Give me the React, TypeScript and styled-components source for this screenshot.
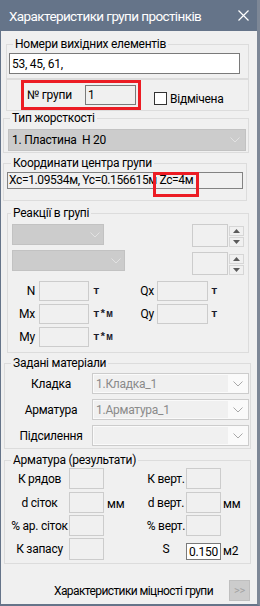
import styled, { createGlobalStyle } from "styled-components";

const GlobalStyle = createGlobalStyle`
  body {
    margin: 0;
    background: #f0f0f0;
    font-family: Roboto, "Liberation Sans", sans-serif;
    font-size: 12px;
    letter-spacing: -0.25px;
    color: #000;
  }
`;

const Window = styled.div`
  width: 260px;
  height: 606px;
  box-sizing: border-box;
  background: #f0f0f0;
  border-left: 1px solid #657489;
  border-right: 3px solid #7d8796;
  border-bottom: 2px solid #657489;
  display: flex;
  flex-direction: column;
  align-items: flex-start;
  overflow: hidden;
`;

const TitleBar = styled.div`
  align-self: stretch;
  flex-shrink: 0;
  height: 31px;
  background: #657489;
  color: #fff;
  font-size: 13.5px;
  letter-spacing: -0.6px;
  display: flex;
  align-items: center;
  justify-content: space-between;
  padding: 0 8px 0 8px;
`;

const Group = styled.fieldset<{ $ml: number; $w: number; $mt: number; $pl?: number; $pb?: number }>`
  box-sizing: border-box;
  flex-shrink: 0;
  width: ${(p) => p.$w}px;
  margin: ${(p) => p.$mt}px 0 0 ${(p) => p.$ml}px;
  padding: 0 0 ${(p) => p.$pb ?? 0}px ${(p) => p.$pl ?? 0}px;
  border: 1px solid #dcdcdc;
  min-width: 0;
`;

const Legend = styled.legend<{ $indent: number }>`
  margin-left: ${(p) => p.$indent}px;
  padding: 0 2px;
  font-size: 12px;
  line-height: 14px;
`;

const Panel = styled.div`
  box-sizing: border-box;
  flex-shrink: 0;
  width: 243px;
  height: 32px;
  margin-left: 5px;
  border: 1px solid #dcdcdc;
  display: flex;
  align-items: flex-start;
  padding-left: 14px;
`;

const RedFrame = styled.div`
  box-sizing: border-box;
  width: 120px;
  height: 30px;
  border: 3px solid #ec1c24;
  display: flex;
  align-items: center;
  padding-left: 3px;
`;

const Caption = styled.span<{ $w?: number; $align?: string }>`
  display: inline-block;
  flex-shrink: 0;
  width: ${(p) => (p.$w ? `${p.$w}px` : "auto")};
  text-align: ${(p) => p.$align ?? "left"};
  white-space: nowrap;
  line-height: 14px;
`;

const Edit = styled.div<{ $w: number; $h: number; $tone?: "white" | "gray" | "light"; $ml?: number; $mt?: number }>`
  box-sizing: border-box;
  flex-shrink: 0;
  width: ${(p) => p.$w}px;
  height: ${(p) => p.$h}px;
  margin-left: ${(p) => p.$ml ?? 0}px;
  margin-top: ${(p) => p.$mt ?? 0}px;
  border: 1px solid ${(p) => (p.$tone === "light" ? "#cccccc" : "#7a7a7a")};
  background: ${(p) => (p.$tone === "white" ? "#fff" : "#f0f0f0")};
  display: flex;
  align-items: center;
  padding-left: 2px;
  white-space: nowrap;
  line-height: 14px;
`;

const CheckRow = styled.label`
  display: flex;
  align-items: center;
  margin: 12px 0 0 13px;
  height: 13px;
  gap: 3px;
`;

const CheckBox = styled.span`
  box-sizing: border-box;
  width: 13px;
  height: 13px;
  border: 1px solid #333;
  background: #fff;
`;

const Combo = styled.div<{ $w: number; $h: number; $mt?: number; $pr?: number }>`
  box-sizing: border-box;
  flex-shrink: 0;
  width: ${(p) => p.$w}px;
  height: ${(p) => p.$h}px;
  margin-top: ${(p) => p.$mt ?? 0}px;
  background: #cccccc;
  border: 1px solid #c2c2c2;
  display: flex;
  align-items: center;
  justify-content: space-between;
  padding: 0 ${(p) => p.$pr ?? 5}px 0 3px;
  white-space: nowrap;
`;

const MatCombo = styled.div`
  box-sizing: border-box;
  width: 157px;
  height: 21px;
  border: 1px solid #cccccc;
  background: #fafafa;
  display: flex;
  align-items: stretch;
`;

const MatText = styled.div`
  flex: 1;
  margin: 1px 0 1px 1px;
  background: #f0f0f0;
  color: #8a8a8a;
  display: flex;
  align-items: center;
  padding-left: 2px;
`;

const MatArrow = styled.div`
  width: 20px;
  display: flex;
  align-items: center;
  justify-content: center;
`;

const CoordField = styled.div`
  box-sizing: border-box;
  width: 236px;
  height: 17px;
  margin-top: 2px;
  border: 1px solid #828282;
  background: #f0f0f0;
  padding-left: 1px;
  line-height: 15px;
  letter-spacing: -0.37px;
  white-space: nowrap;
`;

const Marked = styled.span`
  position: relative;
  &::after {
    content: "";
    position: absolute;
    left: -6px;
    top: -1px;
    width: 46px;
    height: 25px;
    box-sizing: border-box;
    border: 3px solid #ec1c24;
  }
`;

const Row = styled.div<{ $mt?: number; $h?: number; $pl?: number; $pr?: number; $align?: string }>`
  display: flex;
  align-items: ${(p) => p.$align ?? "center"};
  margin-top: ${(p) => p.$mt ?? 0}px;
  height: ${(p) => (p.$h ? `${p.$h}px` : "auto")};
  padding: 0 ${(p) => p.$pr ?? 0}px 0 ${(p) => p.$pl ?? 0}px;
`;

const SpinGroup = styled.div<{ $mt: number }>`
  margin-left: auto;
  margin-top: ${(p) => p.$mt}px;
  display: flex;
  align-items: flex-start;
`;

const SpinCol = styled.div`
  display: flex;
  flex-direction: column;
  gap: 1px;
  margin: 2px 0 0 1px;
`;

const SpinButton = styled.div`
  box-sizing: border-box;
  width: 15px;
  height: 10px;
  border: 1px solid #d6d6d6;
  background: #f0f0f0;
  display: flex;
  align-items: center;
  justify-content: center;
`;

const Unit = styled.span<{ $ml: number; $w?: number }>`
  display: inline-block;
  flex-shrink: 0;
  margin-left: ${(p) => p.$ml}px;
  width: ${(p) => (p.$w ? `${p.$w}px` : "auto")};
  font-family: "Liberation Mono", monospace;
  font-weight: bold;
  font-size: 11px;
  letter-spacing: 0;
  color: #1c1c2c;
`;

const PlainUnit = styled.span<{ $ml: number; $w?: number; $pl?: number }>`
  display: inline-block;
  box-sizing: border-box;
  flex-shrink: 0;
  margin-left: ${(p) => p.$ml}px;
  width: ${(p) => (p.$w ? `${p.$w}px` : "auto")};
  padding: 3px 0 0 ${(p) => p.$pl ?? 0}px;
`;

const Footer = styled.div`
  align-self: stretch;
  margin-top: 16px;
  display: flex;
  justify-content: flex-end;
  align-items: center;
  padding-right: 7px;
  gap: 16px;
`;

const FooterLabel = styled.span`
  letter-spacing: -0.6px;
`;

const MoreButton = styled.div`
  box-sizing: border-box;
  width: 21px;
  height: 21px;
  background: #cccccc;
  border: 1px solid #bfbfbf;
  color: #a3a3a3;
  display: flex;
  align-items: center;
  justify-content: center;
  font-size: 11px;
`;

function Chevron({ color = "#a8a8a8" }: { color?: string }) {
  return (
    <svg width="10" height="6" viewBox="0 0 10 6">
      <polyline points="0.5,0.5 5,5 9.5,0.5" fill="none" stroke={color} strokeWidth="1" />
    </svg>
  );
}

function Tri({ up }: { up?: boolean }) {
  return (
    <svg width="7" height="4" viewBox="0 0 7 4">
      <polygon points={up ? "0,4 7,4 3.5,0" : "0,0 7,0 3.5,4"} fill="#5a5a5a" />
    </svg>
  );
}

function Spinner({ mt }: { mt: number }) {
  return (
    <SpinGroup $mt={mt}>
      <Edit $w={36} $h={23} $tone="light" />
      <SpinCol>
        <SpinButton>
          <Tri up />
        </SpinButton>
        <SpinButton>
          <Tri />
        </SpinButton>
      </SpinCol>
    </SpinGroup>
  );
}

function ForceRow({ a, ua, b, ub, mt }: { a: string; ua: string; b?: string; ub?: string; mt: number }) {
  return (
    <Row $mt={mt} $h={20}>
      <Caption $w={27} $align="right">{a}</Caption>
      <Edit $w={50} $h={20} $tone="light" $ml={4} />
      <Unit $ml={4} $w={28}>{ua}</Unit>
      {b && (
        <>
          <Caption $w={33} $align="right">{b}</Caption>
          <Edit $w={51} $h={20} $tone="light" $ml={3} />
          <Unit $ml={3}>{ub}</Unit>
        </>
      )}
    </Row>
  );
}

function MatRow({ label, value, mt }: { label: string; value: string; mt: number }) {
  return (
    <Row $mt={mt} $h={21} $pl={5}>
      <Caption $w={82} $align="center">{label}</Caption>
      <MatCombo>
        <MatText>{value}</MatText>
        <MatArrow>
          <Chevron />
        </MatArrow>
      </MatCombo>
    </Row>
  );
}

function ResRow(props: {
  a: string;
  b: string;
  unit?: string;
  mt: number;
  h?: number;
  last?: boolean;
}) {
  const { a, b, unit, mt, h = 21, last } = props;
  return (
    <Row $mt={mt} $h={h} $pl={5}>
      <Caption $w={59} $align="center">{a}</Caption>
      <Edit $w={35} $h={h} $tone="light" />
      <PlainUnit $ml={0} $w={42} $pl={3}>{unit}</PlainUnit>
      <Caption $w={40} $align="center">{b}</Caption>
      {last ? (
        <Edit $w={35} $h={17} $tone="white" style={{ alignSelf: "flex-end" }}>0.150</Edit>
      ) : (
        <Edit $w={35} $h={h} $tone="light" />
      )}
      <PlainUnit $ml={2}>{last ? "м2" : unit}</PlainUnit>
    </Row>
  );
}

export default function App() {
  return (
    <>
      <GlobalStyle />
      <Window>
        <TitleBar>
          <span>Характеристики групи простінків</span>
          <svg width="11" height="11" viewBox="0 0 11 11">
            <path d="M0.5 0.5 L10.5 10.5 M10.5 0.5 L0.5 10.5" stroke="#fff" strokeWidth="1.2" />
          </svg>
        </TitleBar>

        <Group $ml={5} $w={243} $mt={6} $pl={2} $pb={4}>
          <Legend $indent={4}>Номери вихідних елементів</Legend>
          <Edit $w={231} $h={21} $tone="white" $mt={2}>53, 45, 61,</Edit>
        </Group>

        <Panel>
          <RedFrame>
            <Caption $w={58}>№ групи</Caption>
            <Edit $w={51} $h={20}>1</Edit>
          </RedFrame>
          <CheckRow>
            <CheckBox />
            <span>Відмічена</span>
          </CheckRow>
        </Panel>

        <Group $ml={2} $w={246} $mt={0} $pl={4} $pb={1}>
          <Legend $indent={2}>Тип жорсткості</Legend>
          <Combo $w={238} $h={22} $mt={4}>
            <span>1. Пластина&nbsp; Н 20</span>
            <Chevron color="#e2e2e2" />
          </Combo>
        </Group>

        <Group $ml={2} $w={244} $mt={3} $pl={3} $pb={11}>
          <Legend $indent={4}>Координати центра групи</Legend>
          <CoordField>
            Xc=1.09534м, Yc=0.156615м <Marked>Zc=4м</Marked>
          </CoordField>
        </Group>

        <Group $ml={6} $w={242} $mt={5} $pb={5}>
          <Legend $indent={3}>Реакції в групі</Legend>
          <Row $mt={4} $pl={4} $pr={4} $align="flex-start">
            <Combo $w={92} $h={21} $pr={3}>
              <span />
              <Chevron color="#e2e2e2" />
            </Combo>
            <Spinner mt={0} />
          </Row>
          <Row $pl={4} $pr={4} $align="flex-start">
            <Combo $w={113} $h={21} $mt={3} $pr={3}>
              <span />
              <Chevron color="#e2e2e2" />
            </Combo>
            <Spinner mt={5} />
          </Row>
          <ForceRow mt={6} a="N" ua="т" b="Qx" ub="т" />
          <ForceRow mt={3} a="Mx" ua="т*м" b="Qy" ub="т" />
          <ForceRow mt={3} a="My" ua="т*м" />
        </Group>

        <Group $ml={3} $w={247} $mt={3} $pb={2}>
          <Legend $indent={6}>Задані матеріали</Legend>
          <MatRow mt={3} label="Кладка" value="1.Кладка_1" />
          <MatRow mt={5} label="Арматура" value="1.Арматура_1" />
          <MatRow mt={5} label="Підсилення" value="" />
        </Group>

        <Group $ml={3} $w={247} $mt={4} $pb={3}>
          <Legend $indent={6}>Арматура (результати)</Legend>
          <ResRow mt={1} a="К рядов" b="К верт." />
          <ResRow mt={3} a="d сіток" b="d верт." unit="мм" />
          <ResRow mt={2} a="% ар. сіток" b="% верт." />
          <ResRow mt={2} h={22} a="К запасу" b="S" last />
        </Group>

        <Footer>
          <FooterLabel>Характеристики міцності групи</FooterLabel>
          <MoreButton>&gt;&gt;</MoreButton>
        </Footer>
      </Window>
    </>
  );
}
